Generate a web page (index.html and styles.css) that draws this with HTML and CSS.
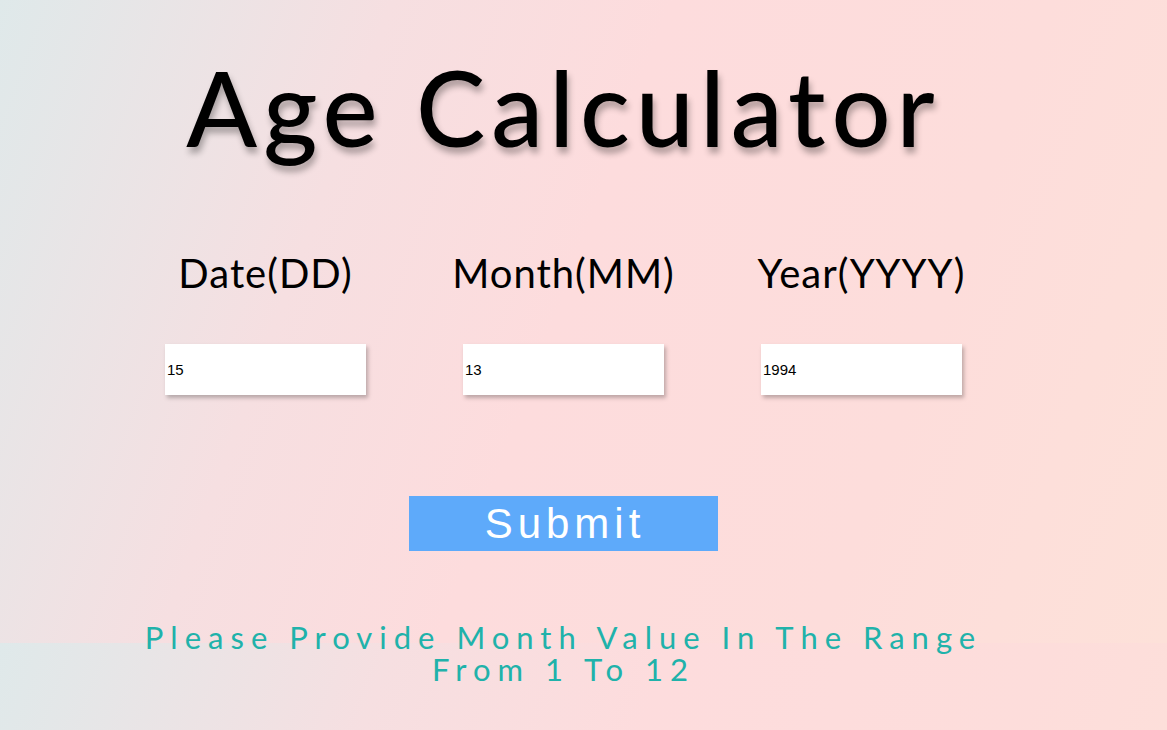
FILE: index.html
```html
<!DOCTYPE html>
<html>
<head>
<meta charset="utf-8">
<title>Age Calculator</title>
<link rel="stylesheet" href="styles.css">
</head>
<body>
<main class="app">
  <h1 class="title">Age Calculator</h1>
  <div class="fields">
    <div class="field">
      <label class="field-label" for="d">Date(DD)</label>
      <input class="field-input" id="d" type="text" value="15">
    </div>
    <div class="field">
      <label class="field-label" for="m">Month(MM)</label>
      <input class="field-input" id="m" type="text" value="13">
    </div>
    <div class="field">
      <label class="field-label" for="y">Year(YYYY)</label>
      <input class="field-input" id="y" type="text" value="1994">
    </div>
  </div>
  <button class="submit" type="button">Submit</button>
  <p class="message">Please Provide Month Value In The Range From 1 To 12</p>
</main>
</body>
</html>
```

FILE: styles.css
```css
html {
  background-color: #dfe9ea;
  background-image: linear-gradient(110deg, #dfe9ea 0%, #f6dfe1 28%, #fddcdd 48%, #fddddb 75%, #fde1d9 100%);
  background-size: 100% 643px;
  background-repeat: repeat-y;
}

body {
  margin: 0;
  font-family: Lato, "Open Sans", sans-serif;
  color: #000;
}

.app {
  width: 1127px;
  display: flex;
  flex-direction: column;
  align-items: center;
}

.title {
  margin: 45px 0 0;
  font-size: 104px;
  font-weight: 500;
  line-height: 1.2;
  letter-spacing: 6px;
  text-shadow: 2px 6px 6px rgba(0, 0, 0, 0.3);
}

.fields {
  display: grid;
  grid-template-columns: repeat(3, 298px);
  margin-top: 79px;
}

.field {
  display: flex;
  flex-direction: column;
  align-items: center;
}

.field-label {
  font-size: 40px;
  line-height: 48px;
  letter-spacing: 1px;
}

.field-input {
  margin-top: 47px;
  width: 201px;
  height: 51px;
  box-sizing: border-box;
  border: none;
  background: #fff;
  padding: 0 2px;
  font-family: "Liberation Sans", Arial, sans-serif;
  font-size: 15px;
  color: #000;
  box-shadow: 2px 3px 4px rgba(0, 0, 0, 0.25);
  outline: none;
}

.submit {
  margin-top: 101px;
  width: 309px;
  height: 55px;
  border: none;
  background: #5eaafa;
  color: #fff;
  font-family: "Liberation Sans", Arial, sans-serif;
  font-size: 42px;
  letter-spacing: 5px;
  padding: 0 0 0 3px;
  line-height: 55px;
}

.message {
  margin: 70px 0 0;
  width: 870px;
  text-align: center;
  color: #20b2aa;
  font-size: 31px;
  line-height: 32px;
  letter-spacing: 7px;
}
```
